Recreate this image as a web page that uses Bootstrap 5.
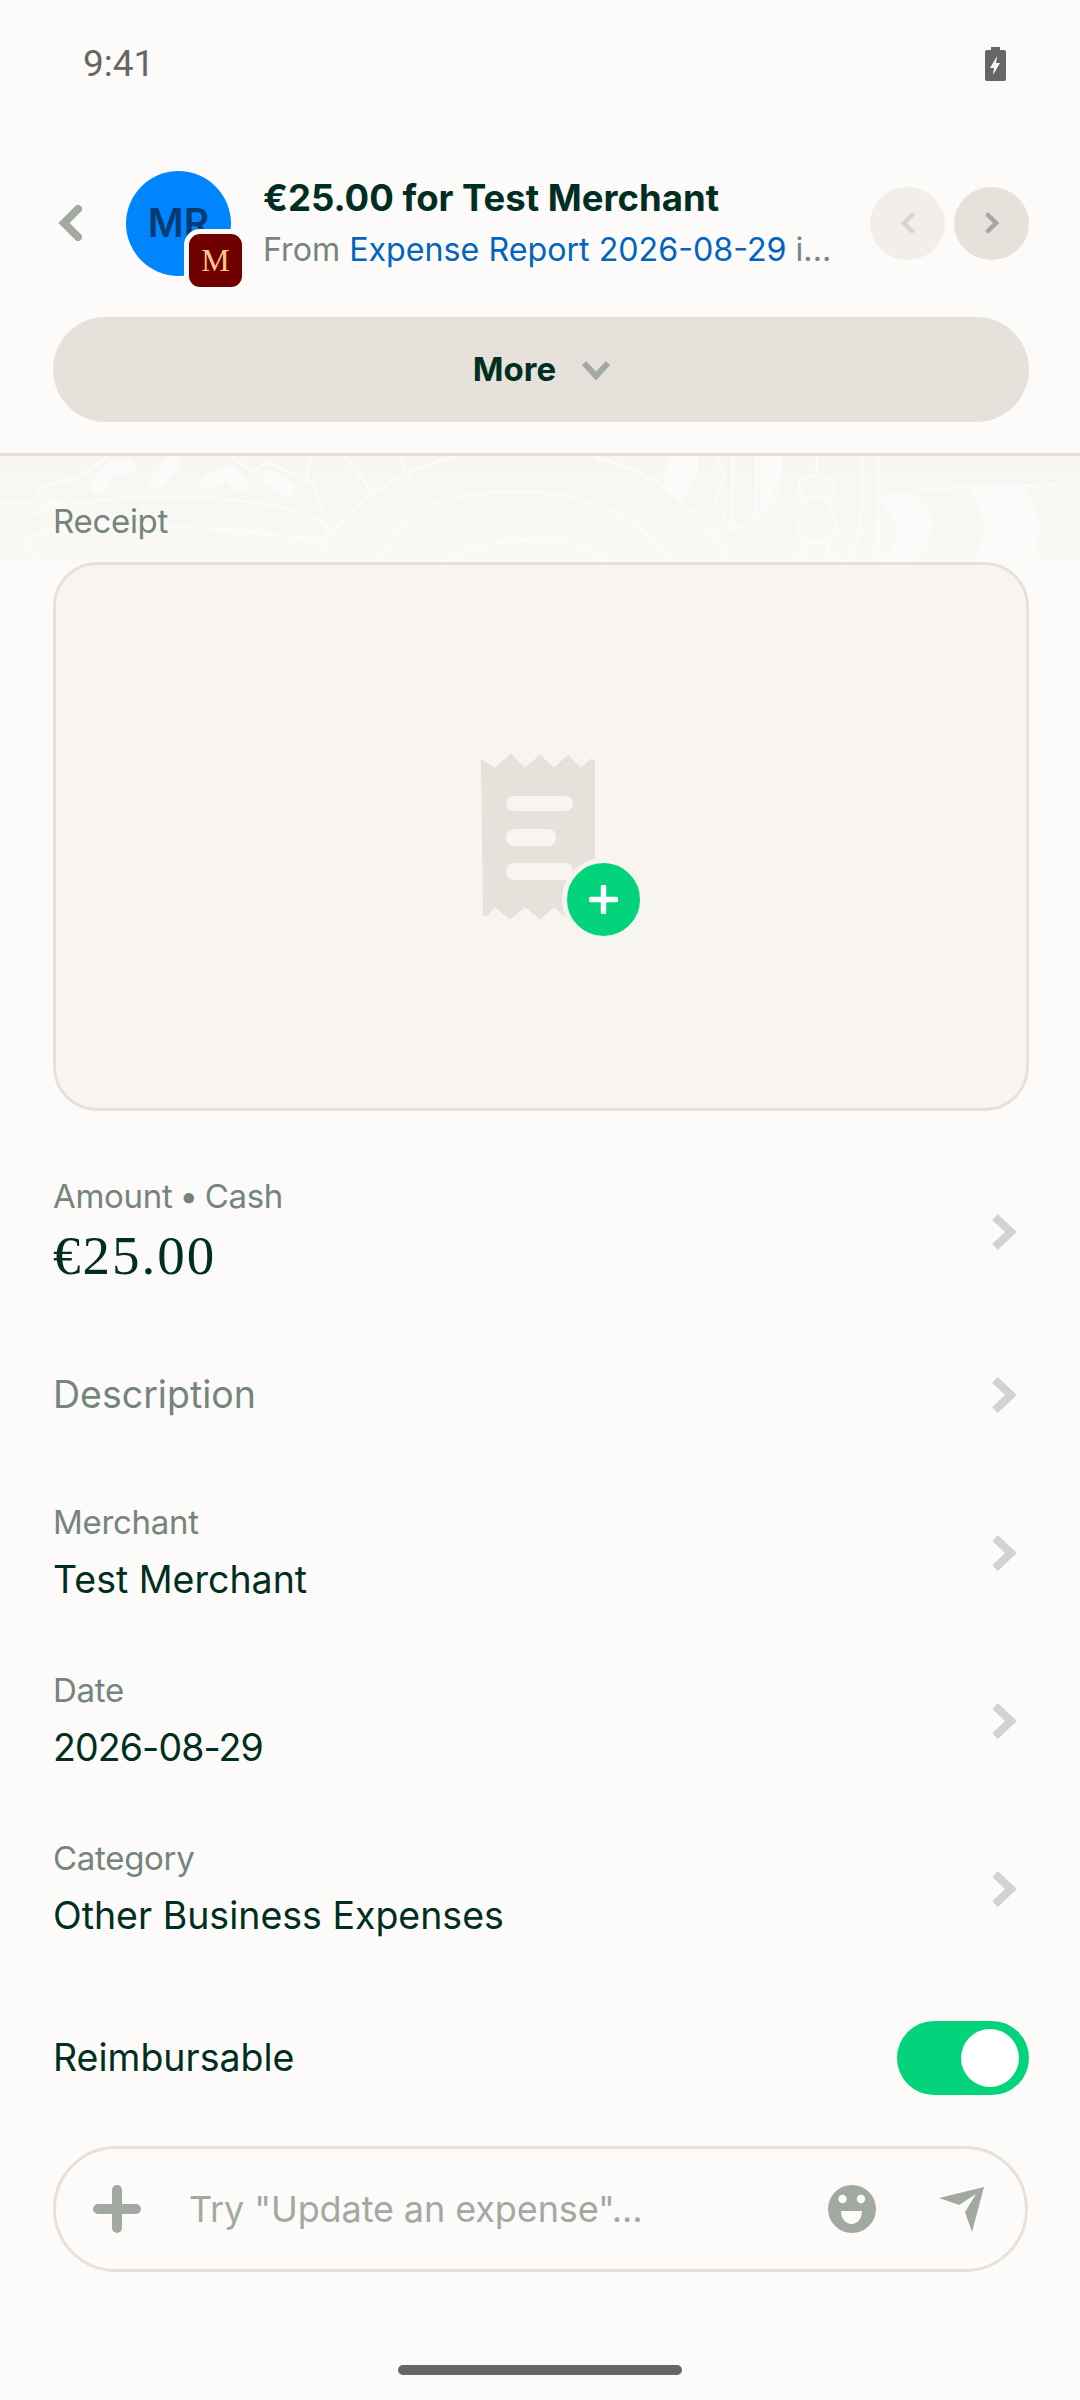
<!DOCTYPE html>
<html lang="en">
<head>
<meta charset="UTF-8">
<title>Expense</title>
<link href="https://cdn.jsdelivr.net/npm/bootstrap@5.3.0/dist/css/bootstrap.min.css" rel="stylesheet">
<style>
body { background: #fcfbf9; color: #002e22; font-family: Inter, "Liberation Sans", sans-serif; width: 1080px; height: 2400px; overflow: hidden; }
.status-row { height: 128px; padding: 0 74px 0 83px; }
.status-time { font-family: Roboto, sans-serif; font-size: 37px; color: #666; }
.head-row { height: 150px; margin-top: 20px; padding: 0 51px 0 58px; }
.avatar-wrap { width: 105px; height: 105px; margin: 0 32px 0 44px; }
.avatar-main { width: 105px; height: 105px; border-radius: 50%; background: #0185ff; color: #003c73; font-size: 39px; font-weight: 600; }
.avatar-badge { position: absolute; right: -16px; bottom: -16px; width: 63px; height: 63px; border: 5px solid #fcfbf9; border-radius: 16px; background: #700000; color: #ffc98e; font-family: "Liberation Serif", serif; font-size: 32px; }
.head-text { margin-top: 2px; }
.head-title { font-size: 36.5px; font-weight: 700; line-height: 52px; white-space: nowrap; }
.head-sub { font-size: 32.2px; line-height: 52px; color: #76847e; width: 565px; white-space: nowrap; }
.head-sub span { color: #0164bf; }
.round-gap { gap: 9px; }
.round-btn { width: 75px; height: 73px; border-radius: 50%; background: #e6e1da; }
.round-btn.is-off { background: #f2efeb; }
.more-wrap { margin-top: 19px; }
.more-btn { margin: 0 51px 0 53px; height: 105px; border-radius: 53px; background: #e6e1da; font-size: 33px; font-weight: 700; color: #002e22; border: 0; width: 976px; padding-left: 8px; }
.more-chev { margin-left: 9px; }
.pattern { height: 109px; border-top: 3px solid #e6e1da; margin-top: 31px; position: relative; background: linear-gradient(#f7f6f2, #faf9f6); }
.pattern svg { position: absolute; left: 0; top: 0; }
.pattern-label { position: absolute; left: 53px; top: 41px; font-size: 33px; color: #76847e; letter-spacing: -.3px; }
.receipt-box { margin: 0 51px 0 53px; height: 549px; background: #f8f4f0; border: 3px solid #e6e1da; border-radius: 44px; }
.receipt-icon { margin-right: 6px; }
.plus-dot { position: absolute; left: 81px; top: 104px; width: 83px; height: 83px; border-radius: 50%; background: #03d47c; border: 5px solid #f8f4f0; }
.field-row { padding: 0 51px 0 53px; }
.chev { margin-right: 11px; }
.row-amount { margin-top: 65px; height: 112px; }
.row-desc { margin-top: 83px; height: 48px; }
.row-merchant { margin-top: 83px; height: 102px; }
.row-next { margin-top: 66px; height: 102px; }
.row-toggle { margin-top: 81px; height: 74px; }
.field-label { font-size: 33px; line-height: 40px; color: #76847e; letter-spacing: -.3px; }
.label-tight { word-spacing: -2px; }
.field-value { font-size: 37.5px; line-height: 48px; margin-top: 14px; }
.date-value { letter-spacing: -.9px; }
.field-amount { font-family: "Liberation Serif", serif; font-size: 55px; line-height: 64px; letter-spacing: 2px; margin-top: 8px; }
.field-plain { font-size: 37.5px; line-height: 48px; }
.field-empty { color: #76847e; }
.switch-track { width: 132px; height: 74px; border-radius: 37px; background: #03d47c; padding: 8px 10px; }
.switch-knob { width: 58px; height: 58px; border-radius: 50%; background: #fff; }
.composer { margin: 51px 52px 0 53px; height: 126px; border: 3px solid #e6e1da; border-radius: 63px; padding: 0 41px 0 37px; }
.composer-text { font-size: 36px; color: #a2a9a3; margin-left: 48px; letter-spacing: -.1px; }
.smile-icon { margin-right: 63px; }
.home-bar { width: 284px; height: 10px; border-radius: 5px; background: #666; margin: 93px auto 0; }
</style>
</head>
<body>
<div class="status-row d-flex justify-content-between align-items-center">
  <span class="status-time">9:41</span>
  <svg width="21" height="34" viewBox="0 0 21 34"><path d="M6 0h9v3h4a2 2 0 0 1 2 2v27a2 2 0 0 1-2 2H2a2 2 0 0 1-2-2V5a2 2 0 0 1 2-2h4z" fill="#666"/><path d="M12 9l-7 12h4l-1 7 7-12h-4z" fill="#fcfbf9"/></svg>
</div>

<div class="head-row d-flex align-items-center">
  <svg width="24" height="36" viewBox="0 0 24 36"><path d="M20 4L6 18l14 14" fill="none" stroke="#a2a9a3" stroke-width="8" stroke-linecap="round"/></svg>
  <div class="avatar-wrap position-relative flex-shrink-0">
    <div class="avatar-main d-flex align-items-center justify-content-center">MR</div>
    <div class="avatar-badge d-flex align-items-center justify-content-center">M</div>
  </div>
  <div class="flex-grow-1 head-text">
    <div class="head-title">€25.00 for Test Merchant</div>
    <div class="head-sub">From <span>Expense Report 2026-08-29</span> i...</div>
  </div>
  <div class="d-flex round-gap">
    <div class="round-btn is-off d-flex align-items-center justify-content-center">
      <svg width="14" height="22" viewBox="0 0 14 22"><path d="M11 3L3 11l8 8" fill="none" stroke="#d3d6d2" stroke-width="4.5" stroke-linecap="round"/></svg>
    </div>
    <div class="round-btn d-flex align-items-center justify-content-center">
      <svg width="14" height="22" viewBox="0 0 14 22"><path d="M3 3l8 8-8 8" fill="none" stroke="#a2a9a3" stroke-width="4.5" stroke-linecap="round"/></svg>
    </div>
  </div>
</div>

<div class="more-wrap">
  <button class="more-btn d-flex align-items-center justify-content-center gap-3">More
    <svg width="30" height="20" viewBox="0 0 30 20" class="more-chev"><path d="M3 3l12 13L27 3" fill="none" stroke="#a2a9a3" stroke-width="6"/></svg>
  </button>
</div>

<div class="pattern">
  <svg width="1080" height="106" viewBox="0 0 1080 106" fill="none" stroke="#fcfbf9" stroke-width="3" stroke-linecap="round" stroke-linejoin="round">
    <path d="M37 52l1-20 39-10 30-21M267 6l46 21 9 29M233 1l19 15 15-10"/>
    <path d="M0 48h40M13 72C30 50 100 41 167 41s143 9 161 31c2 13-10 13-20 11C250 74 140 67 90 70 60 72 35 74 24 86c12 10 12 18 8 22"/>
    <path d="M320 96c15-25 30-42 47-54 25-18 50-32 86-41M343 1c14 12 24 25 27 38M310 1l-4 24M400 1c5 12 8 18 10 26"/>
    <path d="M377 106c17-28 30-44 56-57 30-12 60-14 107-12 30 2 47 8 67 15 25 12 47 30 66 54M597 1c28 8 56 20 76 38 25 20 44 44 57 67M443 106c25-14 50-22 97-22 28 0 48 6 67 22"/>
    <path d="M717 1l8 21-10 20 10 20-12 14M733 1v68M757 1v58M780 1c0 30-4 48-10 48-12 15-30 24-57 27"/>
    <path d="M817 1v20M808 21h18c10 0 12 14 4 24-3 4 6 12 6 24 0 14-10 20-8 26 2 5 8 8 16 11M808 21c-10 0-12 14-4 24 3 4-6 12-6 24 0 14 10 20 8 26-2 5-8 8-16 11M804 43c10-2 18-2 26 0M804 88c10-2 18-2 26 0"/>
    <path d="M862 1v38c0 25-4 50-14 67M878 1v105M880 41c30-5 60-9 93-10 30-2 60-2 87-2"/>
    <path d="M915 39c10 11 15 23 15 30s-8 24-20 37M972 34c10 15 13 28 13 38 0 12-4 22-10 34M1022 32c10 16 15 30 15 44 0 14-4 26-12 36"/>
    <path d="M97 31l15-19 16-1M157 26l16-19M208 27l20-10 12 12M270 22l17 10" stroke-width="15"/>
    <path d="M45 50c3-8 12-8 16 0z" fill="#fcfbf9"/>
    <path d="M673 1c-8 18-10 28 0 38l7 6c10-15 17-25 17-44z M880 44c12 12 18 22 18 30 0 12-6 22-16 32h30c14-16 18-26 18-36 0-12-6-22-16-30zM975 34c10 14 12 28 12 38 0 12-4 22-10 34h50c8-12 10-22 10-32 0-16-6-30-14-41z" fill="#fcfbf9"/>
    <path d="M780 1h-20v56c10-5 18-25 20-56z" fill="#fcfbf9" stroke="none"/>
  </svg>
  <div class="pattern-label">Receipt</div>
</div>

<div class="receipt-box d-flex align-items-center justify-content-center">
  <div class="position-relative receipt-icon">
    <svg width="114" height="166" viewBox="0 0 114 166" class="d-block">
      <path d="M1 7l13 8L30 1l14 14L59 2l14 13L87 2l13 13 10-9 3 1V159l-13-7-13 12-14-12-14 12-15-12-15 12-15-12-9 9-2-1z" fill="#e6e1da" stroke="#e6e1da" stroke-width="2" stroke-linejoin="round"/>
      <rect x="25" y="42" width="67" height="15" rx="7.5" fill="#f8f4f0"/>
      <rect x="25" y="75" width="50" height="17" rx="8" fill="#f8f4f0"/>
      <rect x="25" y="109" width="67" height="17" rx="8" fill="#f8f4f0"/>
    </svg>
    <div class="plus-dot d-flex align-items-center justify-content-center">
      <svg width="29" height="29" viewBox="0 0 29 29"><path d="M14.5 2v25M2 14.5h25" stroke="#fff" stroke-width="5.5" stroke-linecap="round"/></svg>
    </div>
  </div>
</div>

<div class="field-row row-amount d-flex justify-content-between align-items-center">
  <div><div class="field-label label-tight">Amount • Cash</div><div class="field-amount">€25.00</div></div>
  <svg class="chev" width="28" height="38" viewBox="0 0 28 38"><path d="M5 4l16 15L5 34" fill="none" stroke="#d0d3cf" stroke-width="8"/></svg>
</div>
<div class="field-row row-desc d-flex justify-content-between align-items-center">
  <div class="field-plain field-empty">Description</div>
  <svg class="chev" width="28" height="38" viewBox="0 0 28 38"><path d="M5 4l16 15L5 34" fill="none" stroke="#d0d3cf" stroke-width="8"/></svg>
</div>
<div class="field-row row-merchant d-flex justify-content-between align-items-center">
  <div><div class="field-label">Merchant</div><div class="field-value">Test Merchant</div></div>
  <svg class="chev" width="28" height="38" viewBox="0 0 28 38"><path d="M5 4l16 15L5 34" fill="none" stroke="#d0d3cf" stroke-width="8"/></svg>
</div>
<div class="field-row row-next d-flex justify-content-between align-items-center">
  <div><div class="field-label">Date</div><div class="field-value date-value">2026-08-29</div></div>
  <svg class="chev" width="28" height="38" viewBox="0 0 28 38"><path d="M5 4l16 15L5 34" fill="none" stroke="#d0d3cf" stroke-width="8"/></svg>
</div>
<div class="field-row row-next d-flex justify-content-between align-items-center">
  <div><div class="field-label">Category</div><div class="field-value">Other Business Expenses</div></div>
  <svg class="chev" width="28" height="38" viewBox="0 0 28 38"><path d="M5 4l16 15L5 34" fill="none" stroke="#d0d3cf" stroke-width="8"/></svg>
</div>
<div class="field-row row-toggle d-flex justify-content-between align-items-center">
  <div class="field-plain">Reimbursable</div>
  <div class="switch-track d-flex justify-content-end"><div class="switch-knob"></div></div>
</div>

<div class="composer d-flex align-items-center">
  <svg width="48" height="48" viewBox="0 0 48 48" class="flex-shrink-0"><path d="M24 5v38M5 24h38" stroke="#a2a9a3" stroke-width="10" stroke-linecap="round"/></svg>
  <div class="composer-text flex-grow-1">Try "Update an expense"...</div>
  <svg width="48" height="48" viewBox="0 0 48 48" class="flex-shrink-0 smile-icon"><circle cx="24" cy="24" r="24" fill="#a2a9a3"/><circle cx="14.5" cy="14" r="4.2" fill="#fcfbf9"/><circle cx="33" cy="14" r="4.2" fill="#fcfbf9"/><path d="M13 26h21c0 8-5 13-10.5 13S13 34 13 26z" fill="#fcfbf9"/></svg>
  <svg width="45" height="45" viewBox="0 0 45 45" class="flex-shrink-0"><path d="M45 0L0 11l20 7L37 7 26 25l7 20z" fill="#a2a9a3"/></svg>
</div>

<div class="home-bar"></div>

<script src="https://cdn.jsdelivr.net/npm/bootstrap@5.3.0/dist/js/bootstrap.bundle.min.js"></script>
</body>
</html>
